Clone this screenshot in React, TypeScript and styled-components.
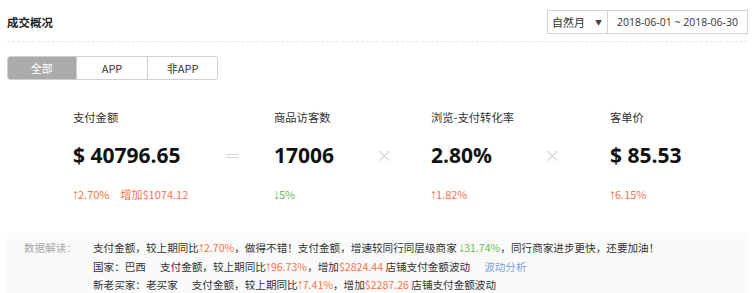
import React from 'react';
import styled, { createGlobalStyle } from 'styled-components';

const GlobalStyle = createGlobalStyle`
    body {
        margin: 0;
        background: #fff;
        font-family: "Noto Sans CJK SC", "Noto Sans", sans-serif;
        color: #333;
    }
`;

const Page = styled.div`
    padding: 0 7px;
    width: 741px;
`;

const Header = styled.div`
    display: flex;
    align-items: center;
    justify-content: space-between;
    height: 42px;
    padding-top: 2px;
    box-sizing: border-box;
    border-bottom: 1px dashed #e6e6e6;
`;

const Title = styled.h2`
    margin: 0;
    font-size: 11.5px;
    font-weight: bold;
    line-height: 18px;
    color: #222;
`;

const DateBox = styled.div`
    display: flex;
    height: 24px;
    border: 1px solid #d4d4d4;
    box-sizing: border-box;
    font-size: 11px;
    line-height: 22px;
`;

const Select = styled.div`
    display: flex;
    justify-content: space-between;
    align-items: center;
    width: 60px;
    padding: 0 5px 0 4px;
    box-sizing: border-box;
    border-right: 1px solid #d4d4d4;

    span.caret {
        font-size: 7px;
        color: #444;
    }
`;

const Range = styled.div`
    padding: 0 9px;
    font-family: "Open Sans", "Noto Sans CJK SC", sans-serif;
    font-size: 10.5px;
`;

const Tabs = styled.div`
    display: flex;
    margin-top: 14px;
    width: 211px;
    height: 24px;
    border: 1px solid #cfcfcf;
    border-radius: 3px;
    overflow: hidden;
    box-sizing: border-box;
`;

const Tab = styled.div<{ active?: boolean; w: number }>`
    width: ${p => p.w}px;
    display: flex;
    align-items: center;
    justify-content: center;
    font-size: 11px;
    background: ${p => (p.active ? '#ababab' : '#fff')};
    color: ${p => (p.active ? '#fff' : '#333')};
    & + & {
        border-left: 1px solid #cfcfcf;
    }
`;

const Metrics = styled.div`
    display: grid;
    grid-template-columns: 153px 48px 104px 53px 115px 64px auto;
    margin-top: 28px;
    padding-left: 66px;
`;

const Metric = styled.div`
    display: flex;
    flex-direction: column;
`;

const Label = styled.div`
    font-size: 11.3px;
    line-height: 18px;
    color: #333;
`;

const Value = styled.div`
    margin-top: 14px;
    font-family: "Open Sans", "Noto Sans", sans-serif;
    font-size: 21px;
    font-weight: bold;
    line-height: 30px;
    color: #111;
    white-space: nowrap;
`;

const Change = styled.div`
    margin-top: 15px;
    font-size: 11px;
    line-height: 18px;
    white-space: nowrap;
    display: flex;
    gap: 11px;
`;

const Tone = styled.span<{ tone: 'up' | 'down' | 'link' }>`
    color: ${p => (p.tone === 'up' ? '#fa7344' : p.tone === 'down' ? '#6cbd55' : '#7c9fe0')};
`;

const Arrow = styled.span`
    font-family: "Liberation Sans", "DejaVu Sans", sans-serif;
    font-size: 1.3em;
    line-height: 1;
    display: inline-block;
    width: 5px;
    overflow: visible;
    text-indent: -1px;
    font-weight: 300;
`;

const Operator = styled.div`
    padding-top: 32px;
    font-size: 20px;
    line-height: 30px;
    color: #cfd3d3;
    font-family: "DejaVu Sans", sans-serif;
    font-weight: 300;
    margin-left: -2px;
`;

const Summary = styled.div`
    display: flex;
    margin-top: 30px;
    padding: 6px 0 4px 17px;
    background: #fafafa;
    font-size: 10.6px;
    line-height: 18.5px;
`;

const SummaryLabel = styled.div`
    width: 69px;
    flex: none;
    color: #aaa;
`;

const Lines = styled.div`
    display: flex;
    flex-direction: column;
    white-space: nowrap;
`;

const Gap = styled.span`
    display: inline-block;
    width: 14px;
`;

type Dir = 'up' | 'down';

const Delta = ({ dir, children }: { dir: Dir; children: React.ReactNode }) => (
    <Tone tone={dir}>
        <Arrow>{dir === 'up' ? '↑' : '↓'}</Arrow>
        {children}
    </Tone>
);

const App = () => {
    return (
        <Page>
            <GlobalStyle />
            <Header>
                <Title>成交概况</Title>
                <DateBox>
                    <Select>
                        <span>自然月</span>
                        <span className="caret">▼</span>
                    </Select>
                    <Range>2018-06-01 ~ 2018-06-30</Range>
                </DateBox>
            </Header>
            <Tabs>
                <Tab active w={69}>全部</Tab>
                <Tab w={72}>APP</Tab>
                <Tab w={70}>非APP</Tab>
            </Tabs>
            <Metrics>
                <Metric>
                    <Label>支付金额</Label>
                    <Value>$ 40796.65</Value>
                    <Change>
                        <Delta dir="up">2.70%</Delta>
                        <Tone tone="up">增加$1074.12</Tone>
                    </Change>
                </Metric>
                <Operator>=</Operator>
                <Metric>
                    <Label>商品访客数</Label>
                    <Value>17006</Value>
                    <Change>
                        <Delta dir="down">5%</Delta>
                    </Change>
                </Metric>
                <Operator>×</Operator>
                <Metric>
                    <Label>浏览-支付转化率</Label>
                    <Value>2.80%</Value>
                    <Change>
                        <Delta dir="up">1.82%</Delta>
                    </Change>
                </Metric>
                <Operator>×</Operator>
                <Metric>
                    <Label>客单价</Label>
                    <Value>$ 85.53</Value>
                    <Change>
                        <Delta dir="up">6.15%</Delta>
                    </Change>
                </Metric>
            </Metrics>
            <Summary>
                <SummaryLabel>数据解读：</SummaryLabel>
                <Lines>
                    <div>
                        支付金额，较上期同比<Delta dir="up">2.70%</Delta>，做得不错！支付金额，增速较同行同层级商家{' '}
                        <Delta dir="down">31.74%</Delta>，同行商家进步更快，还要加油！
                    </div>
                    <div>
                        国家：巴西<Gap />支付金额，较上期同比<Delta dir="up">96.73%</Delta>，增加<Tone tone="up">$2824.44</Tone>{' '}
                        店铺支付金额波动<Gap /><Tone tone="link">波动分析</Tone>
                    </div>
                    <div>
                        新老买家：老买家<Gap />支付金额，较上期同比<Delta dir="up">7.41%</Delta>，增加<Tone tone="up">$2287.26</Tone>{' '}
                        店铺支付金额波动
                    </div>
                </Lines>
            </Summary>
        </Page>
    );
};

export default App;
